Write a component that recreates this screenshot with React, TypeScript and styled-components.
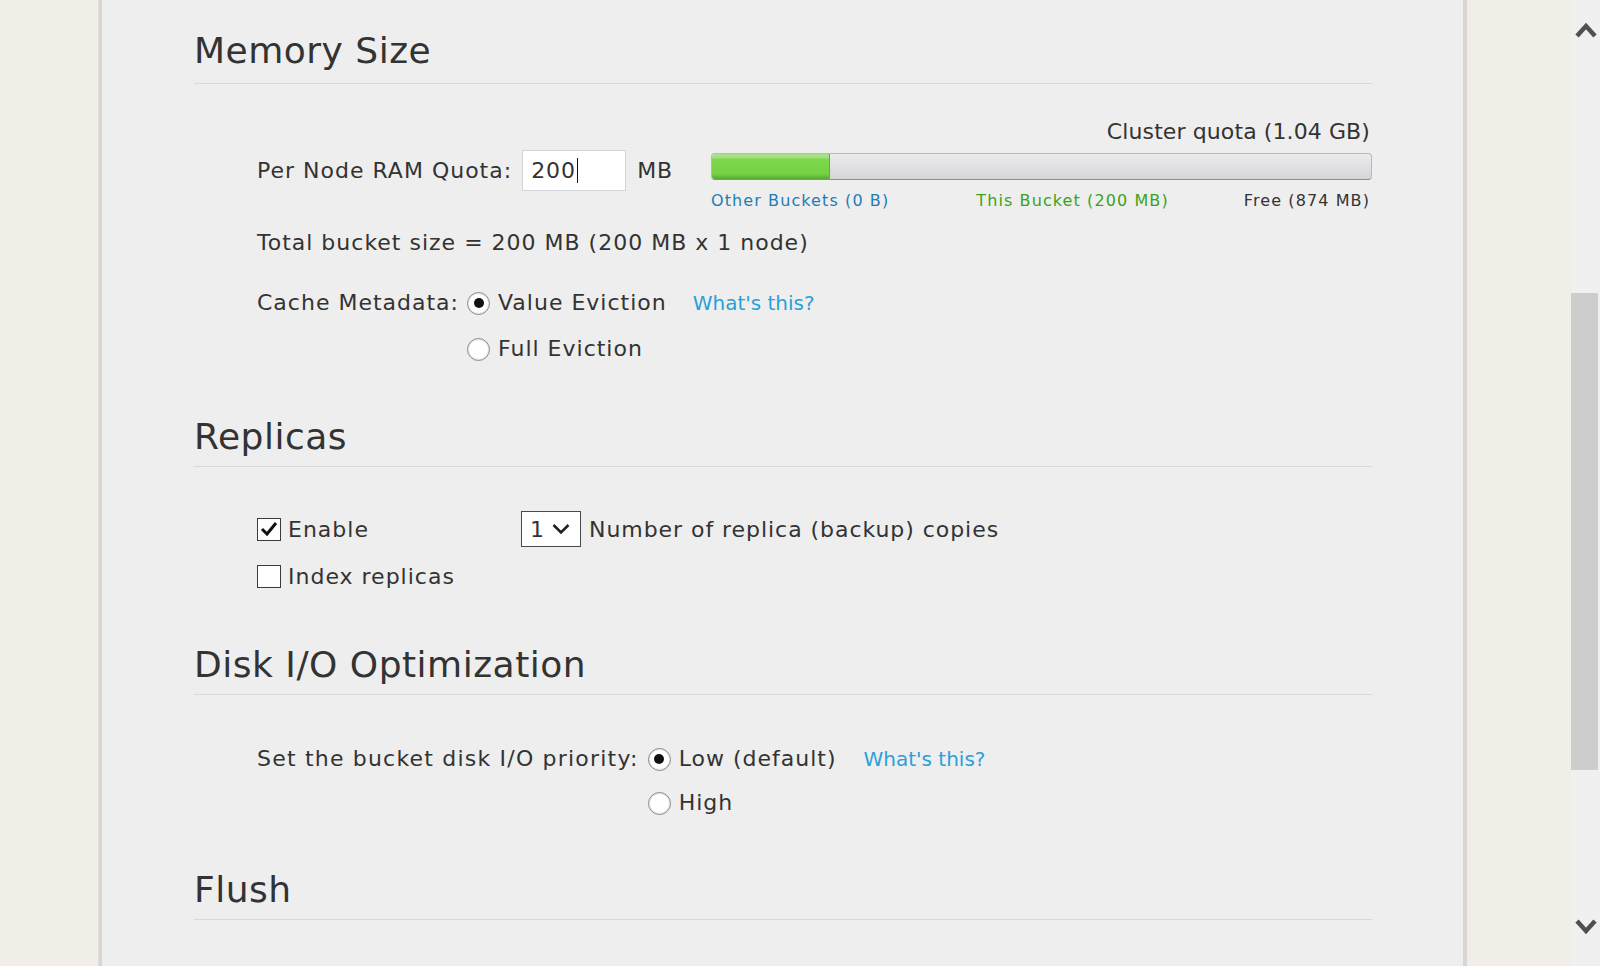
import React from "react";
import styled, { createGlobalStyle } from "styled-components";

const GlobalStyle = createGlobalStyle`
  html, body {
    margin: 0;
    padding: 0;
    height: 100%;
    overflow: hidden;
    background: #f1eee7;
  }
  body {
    font-family: "DejaVu Sans", Verdana, sans-serif;
    color: #333;
  }
`;

const Page = styled.div`
  display: flex;
  width: 1600px;
  height: 966px;
  overflow: hidden;
`;

const Gutter = styled.div<{ w: number }>`
  width: ${({ w }) => w}px;
  flex-shrink: 0;
  background: #f1eee7;
`;

const Panel = styled.div`
  width: 1368px;
  flex-shrink: 0;
  background: #eeeeee;
  border-left: 3px solid #d8d6d0;
  border-right: 4px solid #d8d6d0;
  box-shadow: 1px 0 1px rgba(0, 0, 0, 0.05), -1px 0 1px rgba(0, 0, 0, 0.05);
  padding: 29px 91px 0 92px;
  box-sizing: border-box;
`;

const Heading = styled.h2<{ top?: number; gap?: number }>`
  margin: ${({ top }) => top || 0}px 0 0;
  font-size: 36px;
  line-height: 44px;
  font-weight: normal;
  letter-spacing: 0.5px;
  color: #333;
  padding-bottom: ${({ gap }) => gap || 7}px;
  border-bottom: 1px solid #d2dae0;
`;

const SectionBody = styled.div<{ top: number }>`
  padding: ${({ top }) => top}px 0 0 63px;
  font-size: 22px;
  letter-spacing: 1px;
`;

const QuotaGrid = styled.div`
  display: grid;
  grid-template-columns: 454px 1fr;
`;

const ClusterLabel = styled.div`
  grid-column: 2;
  text-align: right;
  line-height: 22px;
  letter-spacing: 0.1px;
  padding-right: 2px;
  margin-bottom: 7px;
`;

const QuotaField = styled.div`
  display: flex;
  align-items: center;
  height: 41px;
`;

const FakeInput = styled.div`
  display: flex;
  align-items: center;
  width: 104px;
  height: 41px;
  margin: 0 11px 0 10px;
  box-sizing: border-box;
  background: #fff;
  border: 1px solid #cfd5da;
  padding-left: 8px;
`;

const Caret = styled.span`
  display: inline-block;
  width: 1px;
  height: 25px;
  background: #111;
  margin-left: 1px;
`;

const Bar = styled.div`
  align-self: start;
  margin-top: 3px;
  height: 27px;
  box-sizing: border-box;
  border: 1px solid #b9b9b9;
  border-bottom-color: #8e8e8e;
  border-radius: 4px;
  background: linear-gradient(#ececee, #dedee0 60%, #d6d6d8);
  overflow: hidden;
`;

const BarFill = styled.div`
  height: 100%;
  background: linear-gradient(#a9e286 0%, #a9e286 12%, #7dd74c 22%, #76d145 80%, #58a834 100%);
  border-right: 1px solid #5eb03a;
`;

const Legend = styled.div`
  grid-column: 2;
  display: flex;
  justify-content: space-between;
  font-size: 16px;
  letter-spacing: 1.1px;
  line-height: 20px;
  padding-right: 2px;
`;

const LegendItem = styled.span<{ tone: string; shift?: number }>`
  color: ${({ tone }) => tone};
  margin-left: ${({ shift }) => shift || 0}px;
`;

const Line = styled.div<{ top: number }>`
  margin-top: ${({ top }) => top}px;
  line-height: 30px;
`;

const OptionRow = styled.div<{ top: number }>`
  display: flex;
  align-items: flex-start;
  margin-top: ${({ top }) => top}px;
  line-height: 30px;
`;

const OptionList = styled.div<{ gap: number; indent: number }>`
  display: flex;
  flex-direction: column;
  gap: ${({ gap }) => gap}px;
  margin-left: ${({ indent }) => indent}px;
`;

const Option = styled.label`
  display: flex;
  align-items: center;
  height: 30px;
  gap: 8px;
`;

const Radio = styled.span<{ checked?: boolean }>`
  width: 23px;
  height: 23px;
  box-sizing: border-box;
  border-radius: 50%;
  border: 1px solid #8a8a8a;
  background: #fff;
  box-shadow: inset 0 0 0 1px #e4e4e4;
  display: flex;
  align-items: center;
  justify-content: center;
  &::after {
    content: "";
    width: 10px;
    height: 10px;
    border-radius: 50%;
    background: ${({ checked }) => (checked ? "#111" : "transparent")};
  }
`;

const HelpLink = styled.a<{ gap: number }>`
  margin-left: ${({ gap }) => gap}px;
  color: #2a9fda;
  font-size: 20px;
  letter-spacing: 0;
  text-decoration: none;
  cursor: pointer;
`;

const ReplicaGrid = styled.div`
  display: grid;
  grid-template-columns: 264px auto;
  justify-content: start;
  align-items: center;
`;

const CheckRow = styled.label<{ top?: number }>`
  display: flex;
  align-items: center;
  gap: 7px;
  height: ${({ top }) => (top ? 30 : 36)}px;
  margin-top: ${({ top }) => top || 0}px;
  grid-column: 1;
`;

const CheckBox = styled.span`
  width: 24px;
  height: 23px;
  box-sizing: border-box;
  border: 1px solid #3a3a3a;
  background: #fff;
  display: flex;
  align-items: center;
  justify-content: center;
`;

const SelectRow = styled.div`
  display: flex;
  align-items: center;
  gap: 8px;
  letter-spacing: 0.95px;
`;

const SelectBox = styled.div`
  width: 60px;
  height: 36px;
  box-sizing: border-box;
  border: 1px solid #4a4a4a;
  background: #fff;
  display: flex;
  align-items: center;
  justify-content: space-between;
  padding: 0 10px 0 8px;
`;

const PriorityLabel = styled.span`
  letter-spacing: 1.2px;
`;

const Scrollbar = styled.div`
  width: 29px;
  flex-shrink: 0;
  background: #f0f0f0;
  display: flex;
  flex-direction: column;
`;

const ArrowButton = styled.div<{ h: number }>`
  height: ${({ h }) => h}px;
  flex-shrink: 0;
  display: flex;
  align-items: center;
  justify-content: center;
`;

const Track = styled.div`
  flex: 1;
  padding: 0 2px 0 0;
`;

const Thumb = styled.div`
  background: #cdcdcd;
`;

const Chevron = ({ up }: { up?: boolean }) => (
  <svg width="22" height="16" viewBox="0 0 22 16">
    <path
      d={up ? "M2 14 L11 4 L20 14" : "M2 2 L11 12 L20 2"}
      fill="none"
      stroke="#505050"
      strokeWidth="4.5"
    />
  </svg>
);

const fillPct = 17.7;

export default function App() {
  return (
    <>
      <GlobalStyle />
      <Page>
        <Gutter w={99} />
        <Panel>
          <Heading gap={10}>Memory Size</Heading>
          <SectionBody top={37}>
            <QuotaGrid>
              <ClusterLabel>Cluster quota (1.04 GB)</ClusterLabel>
              <QuotaField>
                <span>Per Node RAM Quota:</span>
                <FakeInput>
                  200
                  <Caret />
                </FakeInput>
                <span>MB</span>
              </QuotaField>
              <Bar>
                <BarFill style={{ width: `${fillPct}%` }} />
              </Bar>
              <Legend>
                <LegendItem tone="#1f7db3">Other Buckets (0 B)</LegendItem>
                <LegendItem tone="#3aa31b" shift={12}>
                  This Bucket (200 MB)
                </LegendItem>
                <LegendItem tone="#333">Free (874 MB)</LegendItem>
              </Legend>
            </QuotaGrid>
            <Line top={17}>Total bucket size = 200 MB (200 MB x 1 node)</Line>
            <OptionRow top={30}>
              <span>Cache Metadata:</span>
              <OptionList gap={16} indent={8}>
                <Option>
                  <Radio checked />
                  Value Eviction
                  <HelpLink gap={18}>What's this?</HelpLink>
                </Option>
                <Option>
                  <Radio />
                  Full Eviction
                </Option>
              </OptionList>
            </OptionRow>
          </SectionBody>

          <Heading top={51}>Replicas</Heading>
          <SectionBody top={44}>
            <ReplicaGrid>
              <CheckRow>
                <CheckBox>
                  <svg width="18" height="16" viewBox="0 0 18 16">
                    <path d="M2 8 L7 13 L16 2" fill="none" stroke="#111" strokeWidth="3" />
                  </svg>
                </CheckBox>
                Enable
              </CheckRow>
              <SelectRow>
                <SelectBox>
                  <span>1</span>
                  <svg width="18" height="12" viewBox="0 0 18 12">
                    <path d="M1.5 2 L9 9.5 L16.5 2" fill="none" stroke="#222" strokeWidth="2.6" />
                  </svg>
                </SelectBox>
                <span>Number of replica (backup) copies</span>
              </SelectRow>
              <CheckRow top={14}>
                <CheckBox />
                Index replicas
              </CheckRow>
            </ReplicaGrid>
          </SectionBody>

          <Heading top={52}>Disk I/O Optimization</Heading>
          <SectionBody top={49}>
            <OptionRow top={0}>
              <PriorityLabel>Set the bucket disk I/O priority:</PriorityLabel>
              <OptionList gap={14} indent={9}>
                <Option>
                  <Radio checked />
                  Low (default)
                  <HelpLink gap={19}>What's this?</HelpLink>
                </Option>
                <Option>
                  <Radio />
                  High
                </Option>
              </OptionList>
            </OptionRow>
          </SectionBody>

          <Heading top={50}>Flush</Heading>
        </Panel>
        <Gutter w={104} />
        <Scrollbar>
          <ArrowButton h={60}>
            <Chevron up />
          </ArrowButton>
          <Track>
            <Thumb style={{ marginTop: 233, height: 477 }} />
          </Track>
          <ArrowButton h={78}>
            <Chevron />
          </ArrowButton>
        </Scrollbar>
      </Page>
    </>
  );
}
